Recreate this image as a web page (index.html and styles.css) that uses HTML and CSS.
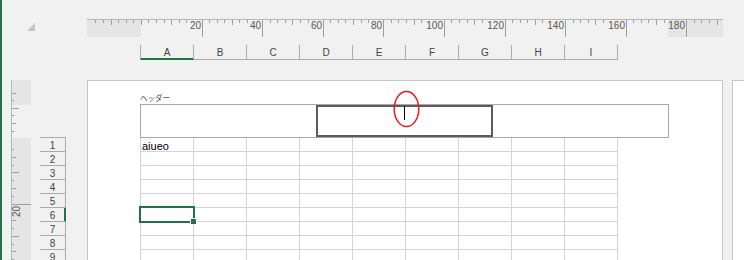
FILE: index.html
```html
<!DOCTYPE html>
<html>
<head>
<meta charset="utf-8">
<title>Page Layout</title>
<link rel="stylesheet" href="styles.css">
</head>
<body>

<div class="edge"></div>

<div class="workspace">
    <div class="corner">
        <svg width="8" height="8"><polygon points="0,8 8,0 8,8" fill="#c4c4c4"/></svg>
    </div>

    <svg id="topRuler" class="top-ruler" width="636" height="18"></svg>

    <div class="col-heads">
        <div class="col-head active">A</div>
        <div class="col-head">B</div>
        <div class="col-head">C</div>
        <div class="col-head">D</div>
        <div class="col-head">E</div>
        <div class="col-head">F</div>
        <div class="col-head">G</div>
        <div class="col-head">H</div>
        <div class="col-head">I</div>
    </div>

    <svg id="sideRuler" class="side-ruler" width="21" height="180"></svg>

    <div class="row-heads">
        <div class="row-list">
            <div class="row-head">1</div>
            <div class="row-head">2</div>
            <div class="row-head">3</div>
            <div class="row-head">4</div>
            <div class="row-head">5</div>
            <div class="row-head active">6</div>
            <div class="row-head">7</div>
            <div class="row-head">8</div>
            <div class="row-head">9</div>
        </div>
    </div>

    <div class="page">
        <div class="header-label">ヘッダー</div>
        <div class="header-box">
            <div class="header-part left"></div>
            <div class="header-part center">
                <span class="caret"></span>
                <svg class="mark" width="29" height="40"><ellipse cx="14.5" cy="20" rx="12.3" ry="17.6"/></svg>
            </div>
            <div class="header-part right"></div>
        </div>
        <div id="sheet" class="sheet">
            <div class="selection"></div>
            <div class="fill-handle"></div>
        </div>
    </div>

    <div class="next-page"></div>
</div>

<script>
    const SVGNS = "http://www.w3.org/2000/svg";

    function add(svg, tag, attrs, text) {
        const el = document.createElementNS(SVGNS, tag);
        for (const name in attrs) {
            el.setAttribute(name, attrs[name]);
        }
        if (text) el.textContent = text;
        svg.appendChild(el);
        return el;
    }

    // top ruler (mm, 0 at column A)
    const topRuler = document.getElementById("topRuler");
    add(topRuler, "rect", {x: 0, y: 1, width: 54, height: 17, class: "shade"});
    add(topRuler, "rect", {x: 581, y: 1, width: 55, height: 17, class: "shade"});
    add(topRuler, "line", {x1: 0, y1: 0.5, x2: 636, y2: 0.5, class: "edge-line"});

    const zeroX = 53.9, step = 7.575;
    const labels = [];
    for (let k = 8; k <= 72; k += 8) {
        labels.push({x: Math.round(zeroX + k * step), text: String(k * 2.5)});
    }

    for (let k = -6; k <= 76; k++) {
        const x = Math.round(zeroX + k * step);
        const hidden = labels.some(l => x < l.x && x > l.x - l.text.length * 5.6 - 3);
        if (hidden) continue;
        let len = 3;
        if (k > 0 && k % 8 === 0) len = 17;
        else if (k % 4 === 0) len = 5;
        add(topRuler, "line", {x1: x + 0.5, y1: 1, x2: x + 0.5, y2: 1 + len, class: "tick"});
    }
    labels.forEach(l => {
        add(topRuler, "text", {x: l.x - 1, y: 10, "text-anchor": "end", class: "ruler-num"}, l.text);
    });

    // side ruler
    const sideRuler = document.getElementById("sideRuler");
    add(sideRuler, "rect", {x: 1, y: 0, width: 19, height: 25, class: "shade"});
    add(sideRuler, "rect", {x: 1, y: 58, width: 19, height: 122, class: "shade"});
    add(sideRuler, "line", {x1: 0.5, y1: 0, x2: 0.5, y2: 180, class: "edge-line"});

    [[13, 4], [20, 2], [28, 7], [35, 2], [43, 4], [51, 2]].forEach(t => {
        add(sideRuler, "line", {x1: 1, y1: t[0] + 0.5, x2: 1 + t[1], y2: t[0] + 0.5, class: "tick"});
    });
    for (let j = -7; j <= 7; j++) {
        if (j === 1) continue;
        const y = Math.round(124 + j * 7.9) + 0.5;
        let len = 2;
        if (j === 0) len = 19;
        else if (j % 4 === 0) len = 7;
        else if (j % 2 === 0) len = 4;
        add(sideRuler, "line", {x1: 1, y1: y, x2: 1 + len, y2: y, class: "tick"});
    }
    add(sideRuler, "text", {transform: "translate(9,137) rotate(-90)", class: "ruler-num"}, "20");

    // cells
    const sheet = document.getElementById("sheet");
    for (let r = 1; r <= 9; r++) {
        for (let c = 0; c < 9; c++) {
            const cell = document.createElement("div");
            cell.className = "cell";
            if (r === 1 && c === 0) cell.textContent = "aiueo";
            sheet.insertBefore(cell, sheet.querySelector(".selection"));
        }
    }
</script>
</body>
</html>
```

FILE: styles.css
```css
        body {
            margin: 0;
            width: 744px;
            height: 260px;
            overflow: hidden;
            display: flex;
            background-color: #f1f1f1;
            font-family: "Liberation Sans", "Noto Sans CJK JP", sans-serif;
        }
        .edge {
            width: 2px;
            background-color: #217346;
        }
        .workspace {
            display: grid;
            grid-template-columns: 9px 21px 8px 26px 21px 636px 9px 12px;
            grid-template-rows: 19px 18px 8px 15px 20px 180px;
        }
        .corner {
            grid-column: 1 / 5;
            grid-row: 1 / 5;
            padding: 23px 0 0 25px;
        }
        .corner svg {
            display: block;
        }

        /* rulers */
        .top-ruler {
            grid-column: 6;
            grid-row: 2;
            display: block;
        }
        .side-ruler {
            grid-column: 2;
            grid-row: 6;
            display: block;
        }
        .shade {
            fill: #e5e5e5;
        }
        .edge-line {
            stroke: #b6b6b6;
            stroke-width: 1;
        }
        .tick {
            stroke: #9e9e9e;
            stroke-width: 1;
        }
        .ruler-num {
            font-family: "Liberation Sans", sans-serif;
            font-size: 10px;
            fill: #565656;
        }

        /* headings */
        .col-heads {
            grid-column: 6;
            grid-row: 4;
            display: flex;
            padding-left: 53px;
        }
        .col-head {
            width: 53px;
            height: 15px;
            box-sizing: border-box;
            border-right: 1px solid #ababab;
            border-bottom: 1px solid #ababab;
            text-align: center;
            font-size: 10px;
            line-height: 15px;
            color: #444;
        }
        .col-head:first-child {
            width: 54px;
            border-left: 1px solid #ababab;
        }
        .col-head.active {
            border-bottom-color: #217346;
            box-shadow: inset 0 -1px 0 #217346;
        }
        .row-heads {
            grid-column: 4;
            grid-row: 6;
            padding-top: 57px;
        }
        .row-list {
            border-top: 1px solid #ababab;
        }
        .row-head {
            height: 14px;
            box-sizing: border-box;
            padding-top: 2px;
            border-right: 1px solid #ababab;
            border-bottom: 1px solid #ababab;
            text-align: center;
            font-size: 10px;
            line-height: 11px;
            color: #444;
        }
        .row-head.active {
            border-right-color: #217346;
            box-shadow: inset -1px 0 0 #217346;
        }

        /* page */
        .page {
            grid-column: 6;
            grid-row: 6;
            box-sizing: border-box;
            padding: 13px 0 0 52px;
            background-color: white;
            border: 1px solid #c6c6c6;
            border-bottom: none;
            overflow: hidden;
        }
        .next-page {
            grid-column: 8;
            grid-row: 6;
            background-color: white;
            border-left: 1px solid #c6c6c6;
            border-top: 1px solid #c6c6c6;
        }
        .header-label {
            height: 10px;
            font-size: 7.5px;
            line-height: 10px;
            color: #555;
        }
        .header-box {
            display: flex;
            width: 529px;
            height: 34px;
            box-sizing: border-box;
            border: 1px solid #a8a8a8;
        }
        .header-part.left {
            width: 175px;
        }
        .header-part.center {
            position: relative;
            width: 177px;
            box-sizing: border-box;
            border: 2px solid #5c5c5c;
            display: flex;
            justify-content: center;
            align-items: flex-start;
        }
        .header-part.right {
            flex: 1;
        }
        .caret {
            width: 1px;
            height: 14px;
            margin-top: -1px;
            background-color: #000;
        }
        .mark {
            position: absolute;
            left: 74px;
            top: -18px;
            overflow: visible;
        }
        .mark ellipse {
            fill: none;
            stroke: #f01818;
            stroke-width: 1.5;
        }

        /* sheet */
        .sheet {
            position: relative;
            display: grid;
            grid-template-columns: repeat(9, 53px);
            width: max-content;
            border-left: 1px solid #d4d4d4;
        }
        .cell {
            height: 14px;
            box-sizing: border-box;
            padding: 3px 0 0 1px;
            border-right: 1px solid #d4d4d4;
            border-bottom: 1px solid #d4d4d4;
            font-size: 11px;
            line-height: 10px;
            color: #000;
        }
        .selection {
            position: absolute;
            left: -2px;
            top: 68px;
            width: 56px;
            height: 17px;
            box-sizing: border-box;
            border: 2px solid #217346;
        }
        .fill-handle {
            position: absolute;
            left: 49px;
            top: 80px;
            width: 7px;
            height: 7px;
            box-sizing: border-box;
            border: 1px solid white;
            background-color: #217346;
        }
```
